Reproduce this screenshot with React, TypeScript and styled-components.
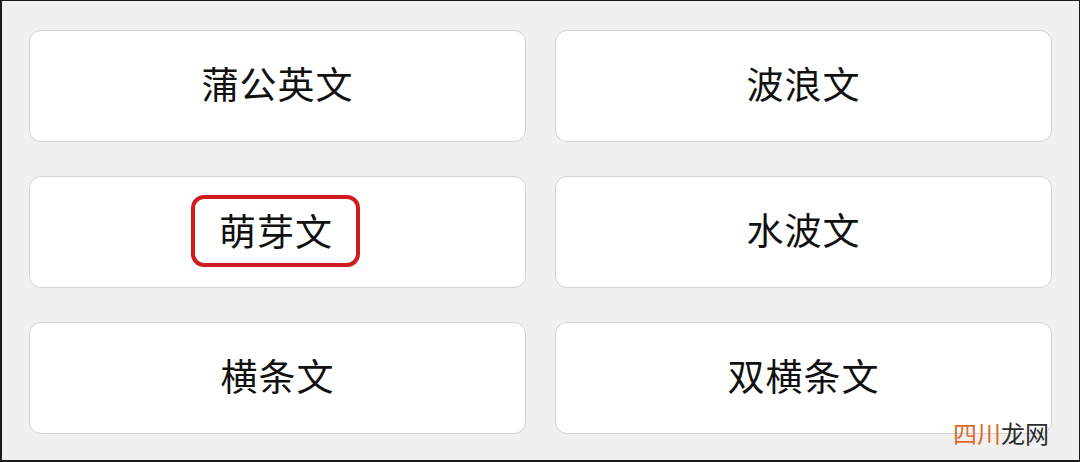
import styled, { createGlobalStyle } from "styled-components"

const GlobalStyle = createGlobalStyle`
  html, body {
    margin: 0;
    padding: 0;
    background: #f0f0f0;
  }
  body {
    font-family: "Noto Sans CJK SC", "Noto Sans", sans-serif;
  }
`

const Frame = styled.div`
  position: relative;
  box-sizing: border-box;
  width: 1080px;
  height: 462px;
  background: #f0f0f0;
  border: 2px solid #1c1c1c;
  border-top-width: 1px;
  border-right-width: 1px;
  padding: 29px 27px 28px 27px;
  display: grid;
  grid-template-columns: 1fr 1fr;
  grid-auto-rows: 112px;
  column-gap: 29px;
  row-gap: 34px;
`

const OptionButton = styled.div`
  box-sizing: border-box;
  background: #ffffff;
  border: 1px solid #d3d3d3;
  border-radius: 12px;
  display: flex;
  align-items: center;
  justify-content: center;
  padding-bottom: 6px;
  font-size: 37px;
  color: #111111;
  letter-spacing: 1px;
`

const Highlight = styled.span`
  display: inline-block;
  border: 4px solid #d01b1f;
  border-radius: 13px;
  padding: 4px 23px 6px 24px;
  margin-right: 4px;
  margin-bottom: -4px;
`

const Watermark = styled.div`
  position: absolute;
  right: 30px;
  bottom: 15px;
  font-size: 24px;
  color: #2b2b2b;
  line-height: 1;
`

const Orange = styled.span`
  color: #e0692a;
`

const options: { label: string; marked?: boolean }[] = [
  { label: "蒲公英文" },
  { label: "波浪文" },
  { label: "萌芽文", marked: true },
  { label: "水波文" },
  { label: "横条文" },
  { label: "双横条文" },
]

export default function App() {
  return (
    <>
      <GlobalStyle />
      <Frame>
        {options.map((o) => (
          <OptionButton key={o.label}>
            {o.marked ? <Highlight>{o.label}</Highlight> : o.label}
          </OptionButton>
        ))}
        <Watermark>
          <Orange>四川</Orange>龙网
        </Watermark>
      </Frame>
    </>
  )
}
